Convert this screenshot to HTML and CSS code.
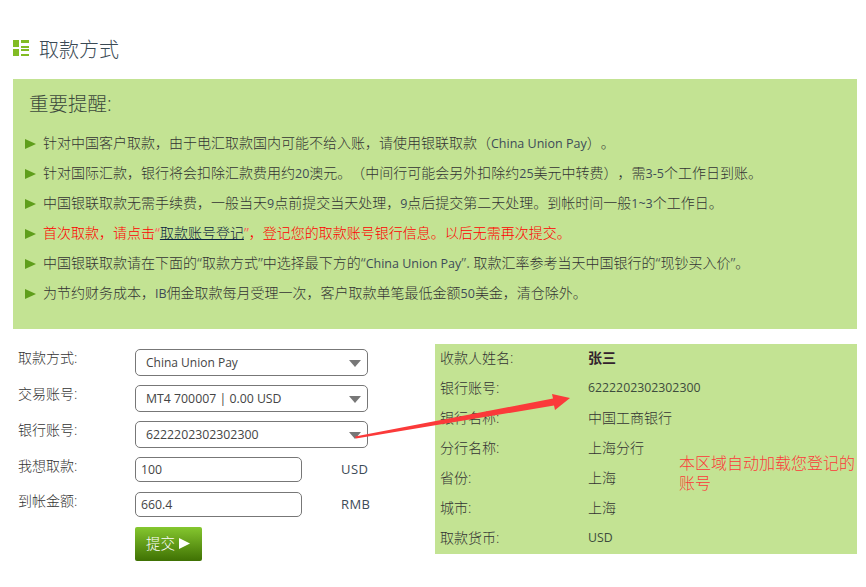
FILE: index.html
```html
<!DOCTYPE html>
<html lang="zh">
<head>
<meta charset="utf-8">
<title>取款方式</title>
<link rel="stylesheet" href="styles.css">
</head>
<body>
<main class="page">
  <h1 class="title">
    <svg class="title-icon" width="16" height="16" viewBox="0 0 16 16"><path fill="#82bc24" d="M0 0h6v7H0zM0 9h6v7H0zM8 0h8v3H8zM8 6h8v2H8zM8 9h8v2H8zM8 14h8v2H8z"/></svg>
    <span>取款方式</span>
  </h1>
  <section class="notice">
    <h2 class="notice-title">重要提醒:</h2>
    <ul class="notice-list">
      <li>针对中国客户取款，由于电汇取款国内可能不给入账，请使用银联取款（<span class="en">China Union Pay</span>）。</li>
      <li>针对国际汇款，银行将会扣除汇款费用约<span class="en">20</span>澳元。（中间行可能会另外扣除约<span class="en">25</span>美元中转费），需<span class="en">3-5</span>个工作日到账。</li>
      <li>中国银联取款无需手续费，一般当天<span class="en">9</span>点前提交当天处理，<span class="en">9</span>点后提交第二天处理。到帐时间一般<span class="en">1~3</span>个工作日。</li>
      <li class="alert">首次取款，请点击<span class="q">“</span><a href="#">取款账号登记</a><span class="q">”</span>，登记您的取款账号银行信息。以后无需再次提交。</li>
      <li>中国银联取款请在下面的<span class="q">“</span>取款方式<span class="q">”</span>中选择最下方的<span class="q">“</span><span class="en">China Union Pay</span><span class="q">”. </span>取款汇率参考当天中国银行的<span class="q">“</span>现钞买入价<span class="q">”</span>。</li>
      <li>为节约财务成本，<span class="en">IB</span>佣金取款每月受理一次，客户取款单笔最低金额<span class="en">50</span>美金，清仓除外。</li>
    </ul>
  </section>
  <div class="lower">
    <form class="form">
      <div class="row"><label>取款方式:</label><div class="select">China Union Pay</div></div>
      <div class="row"><label>交易账号:</label><div class="select num">MT4 700007 | 0.00 USD</div></div>
      <div class="row"><label>银行账号:</label><div class="select num">6222202302302300</div></div>
      <div class="row short"><label>我想取款:</label><input class="input" value="100"><span class="unit">USD</span></div>
      <div class="row short"><label>到帐金额:</label><input class="input" value="660.4"><span class="unit">RMB</span></div>
      <div class="row"><button type="button" class="submit">提交<svg class="submit-icon" width="11" height="11" viewBox="0 0 11 11"><path fill="#fff" d="M0 0l11 5.500L0 11z"/></svg></button></div>
    </form>
    <section class="info">
      <dl class="info-list">
        <div><dt>收款人姓名:</dt><dd class="name">张三</dd></div>
        <div><dt>银行账号:</dt><dd class="small">6222202302302300</dd></div>
        <div><dt>银行名称:</dt><dd>中国工商银行</dd></div>
        <div><dt>分行名称:</dt><dd>上海分行</dd></div>
        <div><dt>省份:</dt><dd>上海</dd></div>
        <div><dt>城市:</dt><dd>上海</dd></div>
        <div><dt>取款货币:</dt><dd class="small">USD</dd></div>
      </dl>
      <p class="auto-note">本区域自动加载您登记的账号</p>
    </section>
  </div>
  <svg class="arrow" width="220" height="50" viewBox="0 0 220 50"><path fill="#fb3a3a" d="M0 43.500L198 5.500 197 1 215 5 200 17 199 12.500 1 45.500Z"/></svg>
</main>
</body>
</html>
```
FILE: styles.css
```css
* { box-sizing: border-box; }
html, body { margin: 0; padding: 0; background: #fff; }
body {
  font-family: "Open Sans", "Noto Sans CJK SC", sans-serif;
  font-size: 12px;
  color: #333;
  text-spacing-trim: space-all;
}
.page { position: relative; width: 866px; height: 587px; padding: 35px 9px 0 13px; overflow: hidden; }
.title { display: flex; align-items: center; gap: 10px; height: 26px; margin: 0 0 18px; font-size: 20px; font-weight: 300; color: #3b4a55; }
.title-icon { flex: none; }
.notice { height: 250px; background: #c3e393; padding: 12px 0 0 16px; }
.notice-title { margin: 0 0 11px; font-size: 19.500px; line-height: 26px; font-weight: 300; color: #3c4a3c; }
.notice-list { list-style: none; margin: 0; padding: 0; }
.notice-list li { height: 30px; line-height: 30px; white-space: nowrap; font-size: 14px; font-weight: 300; color: #333; }
.notice-list li::before { content: ""; display: inline-block; vertical-align: -1px; width: 0; height: 0; border-left: 11px solid #5f9e1c; border-top: 5.500px solid transparent; border-bottom: 5.500px solid transparent; margin: 0 7px 0 -4px; }
.notice-list .en { font-size: 12.500px; font-weight: 400; color: #3d4b58; }
.notice-list .q { font-size: 14px; font-weight: 400; color: #5b6b5b; }
.notice-list .alert { color: #f00; }
.notice-list .alert .q { color: #f66; }
.notice-list a { color: #0c2340; text-decoration: underline; }
.lower { display: flex; align-items: flex-start; margin-top: 15px; }
.form { width: 422px; flex: none; padding: 0 0 0 5px; }
.row { display: flex; align-items: flex-start; height: 36px; padding-top: 5px; }
.row.short { height: 35px; }
.row label { width: 117px; flex: none; font-size: 14px; font-weight: 300; line-height: 20px; margin-top: -1px; color: #333; }
.select { width: 233px; height: 27px; border: 1px solid #777; border-radius: 5px; padding-left: 10px; line-height: 25px; font-size: 12px; color: #444; position: relative; background: #fff; }
.select.num { font-size: 12.300px; }
.select::after { content: ""; position: absolute; right: 6px; top: 10px; border-top: 7px solid #777; border-left: 6.500px solid transparent; border-right: 6.500px solid transparent; }
.input { width: 167px; height: 25px; border: 1px solid #777; border-radius: 5px; padding: 0 0 0 5px; font: inherit; font-size: 12.300px; color: #444; background: #fff; outline: none; }
.unit { margin-left: 39px; line-height: 25px; color: #3d4b58; font-size: 13px; letter-spacing: .4px; }
.submit { margin-left: 117px; width: 67px; height: 34px; border: 0; border-radius: 2px; background: linear-gradient(#85c72f, #3f7103); color: #fff; font: 300 14.500px "Open Sans", "Noto Sans CJK SC", sans-serif; display: flex; align-items: center; justify-content: center; gap: 4px; padding: 0 1px 3px 0; }
.submit-icon { margin-top: 2px; }
.info { position: relative; width: 422px; height: 210px; background: #c3e393; padding-left: 5px; }
.info-list { margin: -2px 0 0; }
.info-list div { display: flex; align-items: center; height: 30px; font-size: 14px; font-weight: 300; }
.info-list dt { width: 148px; flex: none; }
.info-list dd { margin: 0; }
.info-list .small { font-size: 12.300px; font-weight: 400; color: #3d4b3d; }
.info-list .name { font-weight: 700; color: #33222e; }
.auto-note { position: absolute; left: 244px; top: 109px; width: 178px; margin: 0; font-size: 16px; font-weight: 300; line-height: 20px; color: #fb3a3a; }
.arrow { position: absolute; left: 355px; top: 393px; }
```
